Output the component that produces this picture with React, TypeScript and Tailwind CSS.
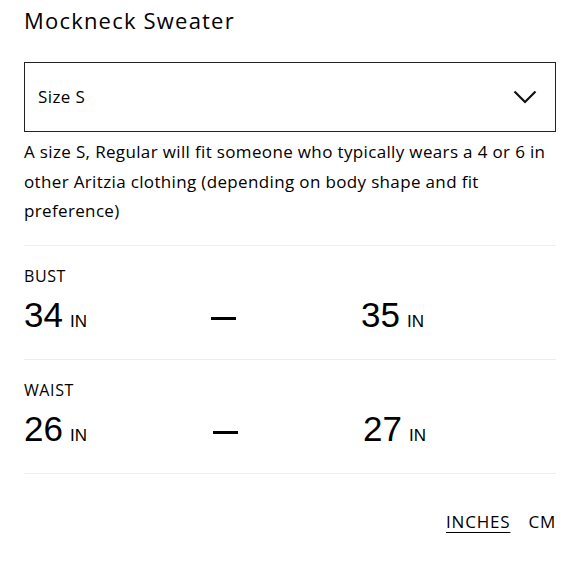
import React from 'react';

const rows = [
  { label: 'BUST', from: '34', to: '35' },
  { label: 'WAIST', from: '26', to: '27' },
];

export default function App() {
  return (
    <div className="w-[580px] h-[580px] bg-white px-6 text-black" style={{ fontFamily: '"Open Sans", "Noto Sans", sans-serif' }}>
      {/* Title */}
      <h1 className="pt-[6px] text-[22px] leading-[28px] tracking-[1.2px]">Mockneck Sweater</h1>

      {/* Size select */}
      <div className="mt-[28px] h-[70px] border-[1.5px] border-[#222] flex items-center justify-between pl-[13px] pr-[18px]">
        <span className="text-[17px] tracking-[0.4px]">Size S</span>
        <svg width="24" height="14" viewBox="0 0 24 14" fill="none" stroke="#111" strokeWidth="2.2">
          <path d="M1.5 1.5 L12 12 L22.5 1.5" />
        </svg>
      </div>

      {/* Description */}
      <p className="mt-[5px] text-[17px] leading-[29.5px] tracking-[0.35px]">
        A size S, Regular will fit someone who typically wears a 4 or 6 in other Aritzia clothing (depending on body shape and fit preference)
      </p>

      {/* Measurements */}
      <div className="mt-[19px] border-t border-[#eeeeee]">
        {rows.map((r, i) => (
          <div key={r.label} className="border-b border-[#eeeeee] pt-[20px] pb-[23px]">
            <div className="text-[16px] leading-[20px] tracking-[0.6px]">{r.label}</div>
            <div className="flex items-baseline mt-[8px]" style={{ fontFamily: '"Liberation Sans", Arial, sans-serif' }}>
              <div className={i === 0 ? 'w-[187px]' : 'w-[189px]'}>
                <span className="text-[35px] leading-[42px]">{r.from}</span>
                <span className="text-[17px] ml-[7px]">IN</span>
              </div>
              <div className="w-[150px]">
                <span className="inline-block w-[25px] h-[2.5px] bg-black align-middle -translate-y-[4px]" />
              </div>
              <div>
                <span className="text-[35px] leading-[42px]">{r.to}</span>
                <span className="text-[17px] ml-[7px]">IN</span>
              </div>
            </div>
          </div>
        ))}
      </div>

      {/* Units */}
      <div className="flex justify-end gap-[18px] mt-[35px] text-[17px] tracking-[0.8px]">
        <span className="underline underline-offset-[4px]">INCHES</span>
        <span>CM</span>
      </div>
    </div>
  );
}
